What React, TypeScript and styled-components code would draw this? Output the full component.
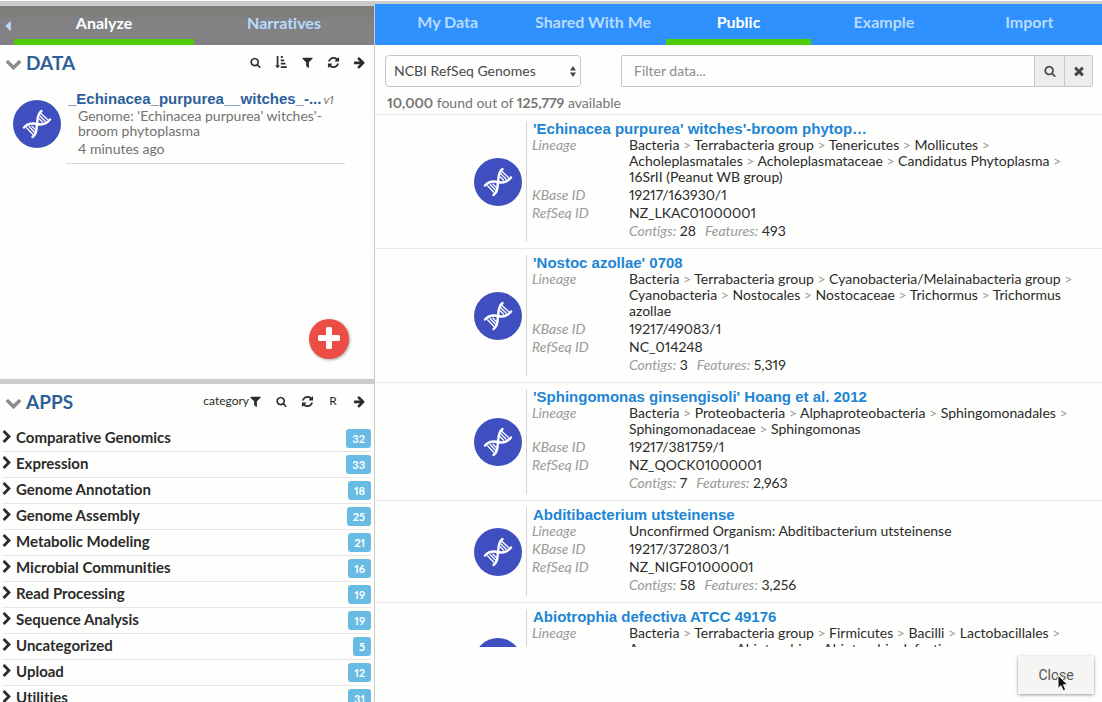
import React from 'react';
import styled, { createGlobalStyle, css } from 'styled-components';

const GlobalStyle = createGlobalStyle`
  *, *::before, *::after { box-sizing: border-box; }
  body {
    margin: 0;
    background: #fefefc;
    color: #2b2b2b;
    font: 14px/16px Lato, sans-serif;
    font-variant-numeric: proportional-nums;
    font-variant-ligatures: none;
    overflow: hidden;
  }
  button, input, select {
    font: inherit;
    font-variant-numeric: proportional-nums;
    font-variant-ligatures: none;
    color: inherit;
    margin: 0;
  }
  h2, h3, ul, dl, dd, dt, p { margin: 0; padding: 0; }
  a { text-decoration: none; }
`;

/* ---------- icons ---------- */

const glyphs = {
  search:
    'M1216 832q0-185-131.5-316.5t-316.5-131.5-316.5 131.5-131.5 316.5 131.5 316.5 316.5 131.5 316.5-131.5 131.5-316.5zm512 832q0 52-38 90t-90 38q-54 0-90-38l-343-342q-179 124-399 124-143 0-273.5-55.5t-225-150-150-225-55.5-273.5 55.5-273.5 150-225 225-150 273.5-55.5 273.5 55.5 225 150 150 225 55.5 273.5q0 220-124 399l343 343q37 37 37 90z',
  sort:
    'M736 1440q0 12-10 24l-319 319q-10 9-23 9-12 0-23-9l-320-320q-15-16-7-35 8-20 30-20h192v-1376q0-14 9-23t23-9h192q14 0 23 9t9 23v1376h192q14 0 23 9t9 23zM896 0h256q32 0 32 32v192q0 32-32 32h-256q-32 0-32-32v-192q0-32 32-32zM896 512h448q32 0 32 32v192q0 32-32 32h-448q-32 0-32-32v-192q0-32 32-32zM896 1024h640q32 0 32 32v192q0 32-32 32h-640q-32 0-32-32v-192q0-32 32-32zM896 1536h832q32 0 32 32v192q0 32-32 32h-832q-32 0-32-32v-192q0-32 32-32z',
  filter:
    'M1595 295q17 41-14 70l-493 493v742q0 42-39 59-13 5-25 5-27 0-45-19l-256-256q-19-19-19-45v-486l-493-493q-31-29-14-70 17-39 59-39h1280q42 0 59 39z',
  refresh:
    'M1639 1056q0 5-1 7-64 268-268 434.5t-478 166.5q-146 0-282.5-55t-243.5-157l-129 129q-19 19-45 19t-45-19-19-45v-448q0-26 19-45t45-19h448q26 0 45 19t19 45-19 45l-137 137q71 66 161 102t187 36q134 0 250-65t186-179q11-17 53-117 8-23 30-23h192q13 0 22.5 9.5t9.5 22.5zm25-800v448q0 26-19 45t-45 19h-448q-26 0-45-19t-19-45 19-45l138-138q-148-137-349-137-134 0-250 65t-186 179q-11 17-53 117-8 23-30 23h-199q-13 0-22.5-9.5t-9.5-22.5v-7q65-268 270-434.5t480-166.5q146 0 284 55.5t245 156.5l130-129q19-19 45-19t45 19 19 45z',
  arrow:
    'M1600 960q0 54-37 91l-651 651q-39 37-91 37-51 0-90-37l-75-75q-38-38-38-91t38-91l293-293h-704q-52 0-84.5-37.5t-32.5-90.5v-128q0-53 32.5-90.5t84.5-37.5h704l-293-294q-38-36-38-90t38-90l75-75q38-38 90-38 53 0 91 38l651 651q37 35 37 90z',
  plus:
    'M1600 736v192q0 40-28 68t-68 28h-416v416q0 40-28 68t-68 28h-192q-40 0-68-28t-28-68v-416h-416q-40 0-68-28t-28-68v-192q0-40 28-68t68-28h416v-416q0-40 28-68t68-28h192q40 0 68 28t28 68v416h416q40 0 68 28t28 68z',
  times:
    'M1490 1322q0 40-28 68l-136 136q-28 28-68 28t-68-28l-294-294-294 294q-28 28-68 28t-68-28l-136-136q-28-28-28-68t28-68l294-294-294-294q-28-28-28-68t28-68l136-136q28-28 68-28t68 28l294 294 294-294q28-28 68-28t68 28l136 136q28 28 28 68t-28 68l-294 294 294 294q28 28 28 68z',
  chevronRight:
    'M1363 877l-742 742q-19 19-45 19t-45-19l-166-166q-19-19-19-45t19-45l531-531-531-531q-19-19-19-45t19-45l166-166q19-19 45-19t45 19l742 742q19 19 19 45t-19 45z',
  chevronDown:
    'M1683 808l-742 741q-19 19-45 19t-45-19l-742-741q-19-19-19-45.5t19-45.5l166-165q19-19 45-19t45 19l531 531 531-531q19-19 45-19t45 19l166 165q19 19 19 45.5t-19 45.5z',
  caretLeft: 'M1216 448v896q0 26-19 45t-45 19-45-19l-448-448q-19-19-19-45t19-45l448-448q19-19 45-19t45 19 19 45z',
};

const Glyph = ({ name, size = 13 }: { name: keyof typeof glyphs; size?: number }) => (
  <svg width={size} height={size} viewBox="0 0 1792 1792" fill="currentColor" aria-hidden="true">
    <path d={glyphs[name]} />
  </svg>
);

const Disc = styled.span`
  display: flex;
  align-items: center;
  justify-content: center;
  flex: none;
  width: 48px;
  height: 48px;
  border-radius: 50%;
  background: #3f4fbf;
`;

const GenomeIcon = () => (
  <Disc>
    <svg width="30" height="30" viewBox="0 0 30 30" fill="none" stroke="#fff" strokeLinecap="round" aria-hidden="true">
      <path d="M2 18.500C6 14 11 14 15 15S24 15.500 28 10.500" strokeWidth="2.400" />
      <path d="M10.500 28C16 24 14 19 15 15S14.500 6 19.500 2" strokeWidth="2.400" />
      <path
        d="M18.800 4.200L25.800 10.800M17.500 6.500L23.500 12.500M17 9.500L20.800 13.500M4.300 18.500L11 25.500M6.800 17.300L12.800 23.500M9.500 16.800L13.500 20.700"
        strokeWidth="1.300"
        strokeLinecap="butt"
      />
    </svg>
  </Disc>
);

/* ---------- frame ---------- */

const Page = styled.div`
  display: flex;
  height: 100vh;
  border-top: 1px solid #fefefc;
`;

const Sidebar = styled.aside`
  display: flex;
  flex-direction: column;
  flex: none;
  width: 375px;
  border-right: 1px solid #cbcbcb;
`;

const Main = styled.main`
  display: flex;
  flex-direction: column;
  flex: 1;
  min-width: 0;
  border-top: 3px solid #cbcbcb;
`;

const TabBar = styled.nav<{ $tone: 'grey' | 'blue' }>`
  display: flex;
  flex: none;
  ${p =>
    p.$tone === 'grey'
      ? css`
          height: 44px;
          border-top: 5px solid #cbcbcb;
          background: linear-gradient(#7d7d7a 11px, #828284 11px);
        `
      : css`
          height: 41px;
          background: #2e91fd;
        `}
`;

const Tab = styled.button<{ $active?: boolean }>`
  flex: 1;
  padding: 1px 0 0;
  border: 0;
  border-bottom: 6px solid ${p => (p.$active ? '#4fcd05' : 'transparent')};
  background: none;
  color: ${p => (p.$active ? '#fff' : '#b9dbff')};
  font-size: 16px;
  font-weight: 700;
`;

const Collapse = styled.button`
  width: 14px;
  padding: 0;
  border: 0;
  background: none;
  color: #b9dbff;
  svg { display: block; }
`;

/* ---------- sidebar ---------- */

const DataPanel = styled.section`
  position: relative;
  flex: none;
  height: 339px;
  border-bottom: 5px solid #cbcbcb;
`;

const AppsPanel = styled.section`
  flex: 1;
  min-height: 0;
  overflow-y: auto;
  scrollbar-width: none;
`;

const PanelHead = styled.header`
  display: flex;
  align-items: center;
  height: 34px;
  padding: 0 8px 0 5px;
`;

const PanelToggle = styled.button`
  display: flex;
  align-items: center;
  gap: 4px;
  padding: 2px 0 0;
  border: 0;
  background: none;
  color: #8b8b8b;
`;

const PanelTitle = styled.h2`
  color: #2d6099;
  font-size: 19px;
  line-height: 24px;
`;

const Tools = styled.div`
  display: flex;
  gap: 12px;
  margin-left: auto;
`;

const Tool = styled.button`
  display: flex;
  align-items: center;
  justify-content: center;
  min-width: 14px;
  height: 16px;
  padding: 0;
  border: 0;
  background: none;
  font-size: 12px;
`;

const DataItem = styled.article`
  display: flex;
  gap: 5px;
  padding: 11px 29px 0 13px;
  & > ${Disc} { margin-top: 10px; }
`;

const DataBody = styled.div`
  flex: 1;
  min-width: 0;
  padding: 0 0 6px 2px;
  border-bottom: 1px solid #d9d9d9;
`;

const DataName = styled.a`
  color: #2d6099;
  font: 700 15px/18px "Liberation Sans", sans-serif;
`;

const Version = styled.i`
  margin-left: 2px;
  color: #777;
  font-size: 12px;
`;

const DataNote = styled.p`
  padding-left: 10px;
  color: #727272;
  line-height: 15px;
  & + & { padding-top: 2px; line-height: 17px; }
`;

const AddButton = styled.button`
  position: absolute;
  right: 25px;
  bottom: 20px;
  display: flex;
  align-items: center;
  justify-content: center;
  width: 40px;
  height: 40px;
  padding: 0;
  border: 0;
  border-radius: 50%;
  background: #ec4d45;
  color: #fff;
  box-shadow: 1px 1px 3px rgba(0, 0, 0, 0.35);
`;

const AppList = styled.ul`
  padding: 8px 3px 0 2px;
  list-style: none;
`;

const AppRow = styled.li`
  display: flex;
  justify-content: space-between;
  height: 26px;
  border-bottom: 1px solid #e7e7e7;
`;

const AppLink = styled.button`
  display: flex;
  align-items: center;
  gap: 2px;
  padding: 0 0 3px;
  border: 0;
  background: none;
  font-size: 15px;
  font-weight: 700;
  svg { margin-left: -2px; }
`;

const Count = styled.span`
  align-self: flex-end;
  margin-bottom: 3px;
  padding: 0 6px;
  border-radius: 3px;
  background: #68bbe3;
  color: #fff;
  font-size: 11px;
  font-weight: 700;
  line-height: 19px;
`;

/* ---------- browser ---------- */

const Filters = styled.form`
  display: flex;
  gap: 40px;
  padding: 10px 9px 0 10px;
`;

const SourceWrap = styled.label`
  position: relative;
  display: block;
  width: 196px;
  svg { position: absolute; right: 4px; top: 11px; pointer-events: none; }
`;

const Source = styled.select`
  appearance: none;
  width: 100%;
  height: 32px;
  padding: 0 8px;
  border: 1px solid #c6c6c6;
  border-radius: 4px;
  background: #fefefc;
  color: #4a4a4a;
`;

const SearchGroup = styled.div`
  display: flex;
  flex: 1;
  height: 32px;
  border: 1px solid #c6c6c6;
  border-radius: 2px;
`;

const SearchBox = styled.input`
  flex: 1;
  min-width: 0;
  padding: 0 12px;
  border: 0;
  background: #fefefe;
  &::placeholder { color: #8c8c8c; opacity: 1; }
`;

const SearchButton = styled.button`
  display: flex;
  align-items: center;
  justify-content: center;
  width: 30px;
  padding: 0;
  border: 0;
  border-left: 1px solid #c6c6c6;
  background: #ededec;
  color: #484848;
  & + & { width: 28px; }
`;

const Summary = styled.p`
  padding: 8px 11px 3px 12px;
  color: #757575;
`;

const Results = styled.div`
  flex: 1;
  min-height: 0;
  overflow-y: auto;
  scrollbar-width: none;
`;

const Result = styled.article`
  display: flex;
  align-items: center;
  padding: 6px 30px 6px 99px;
  border-top: 1px solid #e9e9e9;
`;

const ResultBody = styled.div`
  flex: 1;
  margin-left: 4px;
  padding: 0 0 1px 5px;
  border-left: 1px solid #d4d4d4;
`;

const ResultTitle = styled.h3`
  padding-left: 1px;
  font: 700 15px/16px "Liberation Sans", sans-serif;
  a { color: #2085d5; }
`;

const Facts = styled.dl`
  display: grid;
  grid-template-columns: 97px 1fr;
`;

const Term = styled.dt`
  color: #9a9a9a;
  font-style: italic;
`;

const Fact = styled.dd`
  padding-bottom: 2px;
  white-space: nowrap;
`;

const Line = styled.div``;

const Muted = styled.span`
  color: #9a9a9a;
`;

const Stat = styled.span`
  margin-right: 9px;
  i { color: #9a9a9a; }
`;

const Footer = styled.footer`
  display: flex;
  flex: none;
  justify-content: flex-end;
  padding: 9px 8px 8px;
`;

const CloseButton = styled.button`
  position: relative;
  width: 76px;
  height: 38px;
  padding: 0;
  border: 0;
  background: #f5f5f4;
  color: #555;
  font-family: Roboto, sans-serif;
  box-shadow: 0 1px 3px rgba(0, 0, 0, 0.4);
  svg { position: absolute; left: 39px; top: 18px; }
`;

const apps: [string, number][] = [
  ['Comparative Genomics', 32],
  ['Expression', 33],
  ['Genome Annotation', 18],
  ['Genome Assembly', 25],
  ['Metabolic Modeling', 21],
  ['Microbial Communities', 16],
  ['Read Processing', 19],
  ['Sequence Analysis', 19],
  ['Uncategorized', 5],
  ['Upload', 12],
  ['Utilities', 31],
];

interface Genome {
  title: string;
  lineage: string[];
  kbase: string;
  refseq: string;
  contigs: string;
  features: string;
}

const genomes: Genome[] = [
  {
    title: "'Echinacea purpurea' witches'-broom phytop…",
    lineage: [
      'Bacteria > Terrabacteria group > Tenericutes > Mollicutes >',
      'Acholeplasmatales > Acholeplasmataceae > Candidatus Phytoplasma >',
      '16SrII (Peanut WB group)',
    ],
    kbase: '19217/163930/1',
    refseq: 'NZ_LKAC01000001',
    contigs: '28',
    features: '493',
  },
  {
    title: "'Nostoc azollae' 0708",
    lineage: [
      'Bacteria > Terrabacteria group > Cyanobacteria/Melainabacteria group >',
      'Cyanobacteria > Nostocales > Nostocaceae > Trichormus > Trichormus',
      'azollae',
    ],
    kbase: '19217/49083/1',
    refseq: 'NC_014248',
    contigs: '3',
    features: '5,319',
  },
  {
    title: "'Sphingomonas ginsengisoli' Hoang et al. 2012",
    lineage: [
      'Bacteria > Proteobacteria > Alphaproteobacteria > Sphingomonadales >',
      'Sphingomonadaceae > Sphingomonas',
    ],
    kbase: '19217/381759/1',
    refseq: 'NZ_QOCK01000001',
    contigs: '7',
    features: '2,963',
  },
  {
    title: 'Abditibacterium utsteinense',
    lineage: ['Unconfirmed Organism: Abditibacterium utsteinense'],
    kbase: '19217/372803/1',
    refseq: 'NZ_NIGF01000001',
    contigs: '58',
    features: '3,256',
  },
  {
    title: 'Abiotrophia defectiva ATCC 49176',
    lineage: [
      'Bacteria > Terrabacteria group > Firmicutes > Bacilli > Lactobacillales >',
      'Aerococcaceae > Abiotrophia > Abiotrophia defectiva',
    ],
    kbase: '19217/370410/1',
    refseq: 'NZ_KI535340',
    contigs: '19',
    features: '2,011',
  },
];

const sources = ['My Data', 'Shared With Me', 'Public', 'Example', 'Import'];

const LineageLine = ({ text }: { text: string }) => (
  <Line>
    {text.split('>').map((part, i) => (
      <React.Fragment key={i}>
        {i > 0 && <Muted>&gt;</Muted>}
        {part}
      </React.Fragment>
    ))}
  </Line>
);

const GenomeResult = ({ genome }: { genome: Genome }) => (
  <Result>
    <GenomeIcon />
    <ResultBody>
      <ResultTitle>
        <a href="#genome">{genome.title}</a>
      </ResultTitle>
      <Facts>
        <Term>Lineage</Term>
        <Fact>
          {genome.lineage.map(l => (
            <LineageLine key={l} text={l} />
          ))}
        </Fact>
        <Term>KBase ID</Term>
        <Fact>{genome.kbase}</Fact>
        <Term>RefSeq ID</Term>
        <Fact>{genome.refseq}</Fact>
        <Term />
        <Fact>
          <Stat>
            <i>Contigs:</i> {genome.contigs}
          </Stat>
          <Stat>
            <i>Features:</i> {genome.features}
          </Stat>
        </Fact>
      </Facts>
    </ResultBody>
  </Result>
);

export default function App() {
  return (
    <>
      <GlobalStyle />
      <Page>
        <Sidebar>
          <TabBar $tone="grey">
            <Collapse aria-label="Collapse sidebar">
              <Glyph name="caretLeft" size={16} />
            </Collapse>
            <Tab $active>Analyze</Tab>
            <Tab>Narratives</Tab>
          </TabBar>
          <DataPanel>
            <PanelHead>
              <PanelToggle>
                <Glyph name="chevronDown" size={17} />
                <PanelTitle>DATA</PanelTitle>
              </PanelToggle>
              <Tools>
                <Tool aria-label="Search data"><Glyph name="search" size={11} /></Tool>
                <Tool aria-label="Sort data"><Glyph name="sort" size={12} /></Tool>
                <Tool aria-label="Filter data"><Glyph name="filter" /></Tool>
                <Tool aria-label="Refresh data"><Glyph name="refresh" /></Tool>
                <Tool aria-label="Expand data"><Glyph name="arrow" /></Tool>
              </Tools>
            </PanelHead>
            <DataItem>
              <GenomeIcon />
              <DataBody>
                <DataName href="#data">_Echinacea_purpurea__witches_-...</DataName>
                <Version>v1</Version>
                <DataNote>
                  Genome: 'Echinacea purpurea' witches'-
                  <br />
                  broom phytoplasma
                </DataNote>
                <DataNote>4 minutes ago</DataNote>
              </DataBody>
            </DataItem>
            <AddButton aria-label="Add data">
              <Glyph name="plus" size={28} />
            </AddButton>
          </DataPanel>
          <AppsPanel>
            <PanelHead>
              <PanelToggle>
                <Glyph name="chevronDown" size={17} />
                <PanelTitle>APPS</PanelTitle>
              </PanelToggle>
              <Tools>
                <Tool>category<Glyph name="filter" /></Tool>
                <Tool aria-label="Search apps"><Glyph name="search" size={11} /></Tool>
                <Tool aria-label="Refresh apps"><Glyph name="refresh" /></Tool>
                <Tool>R</Tool>
                <Tool aria-label="Expand apps"><Glyph name="arrow" /></Tool>
              </Tools>
            </PanelHead>
            <AppList>
              {apps.map(([name, count]) => (
                <AppRow key={name}>
                  <AppLink>
                    <Glyph name="chevronRight" size={14} />
                    {name}
                  </AppLink>
                  <Count>{count}</Count>
                </AppRow>
              ))}
            </AppList>
          </AppsPanel>
        </Sidebar>
        <Main>
          <TabBar $tone="blue">
            {sources.map(s => (
              <Tab key={s} $active={s === 'Public'}>
                {s}
              </Tab>
            ))}
          </TabBar>
          <Filters>
            <SourceWrap>
              <Source aria-label="Data source">
                <option>NCBI RefSeq Genomes</option>
              </Source>
              <svg width="8" height="11" viewBox="0 0 8 11" fill="#444" aria-hidden="true">
                <path d="M4 0L7 4.500H1zM4 11L1 6.500H7z" />
              </svg>
            </SourceWrap>
            <SearchGroup>
              <SearchBox aria-label="Filter data" placeholder="Filter data..." />
              <SearchButton type="button" aria-label="Search"><Glyph name="search" size={12} /></SearchButton>
              <SearchButton type="button" aria-label="Clear"><Glyph name="times" size={14} /></SearchButton>
            </SearchGroup>
          </Filters>
          <Summary>
            <b>10,000</b> found out of <b>125,779</b> available
          </Summary>
          <Results>
            {genomes.map(g => (
              <GenomeResult key={g.title} genome={g} />
            ))}
          </Results>
          <Footer>
            <CloseButton>
              Close
              <svg width="12" height="18" viewBox="0 0 12 18" aria-hidden="true">
                <path d="M1 1V14.500L4 11.700L6.200 16.800L8.700 15.700L6.500 10.800H10.600Z" fill="#111" stroke="#fff" strokeWidth="1" />
              </svg>
            </CloseButton>
          </Footer>
        </Main>
      </Page>
    </>
  );
}
